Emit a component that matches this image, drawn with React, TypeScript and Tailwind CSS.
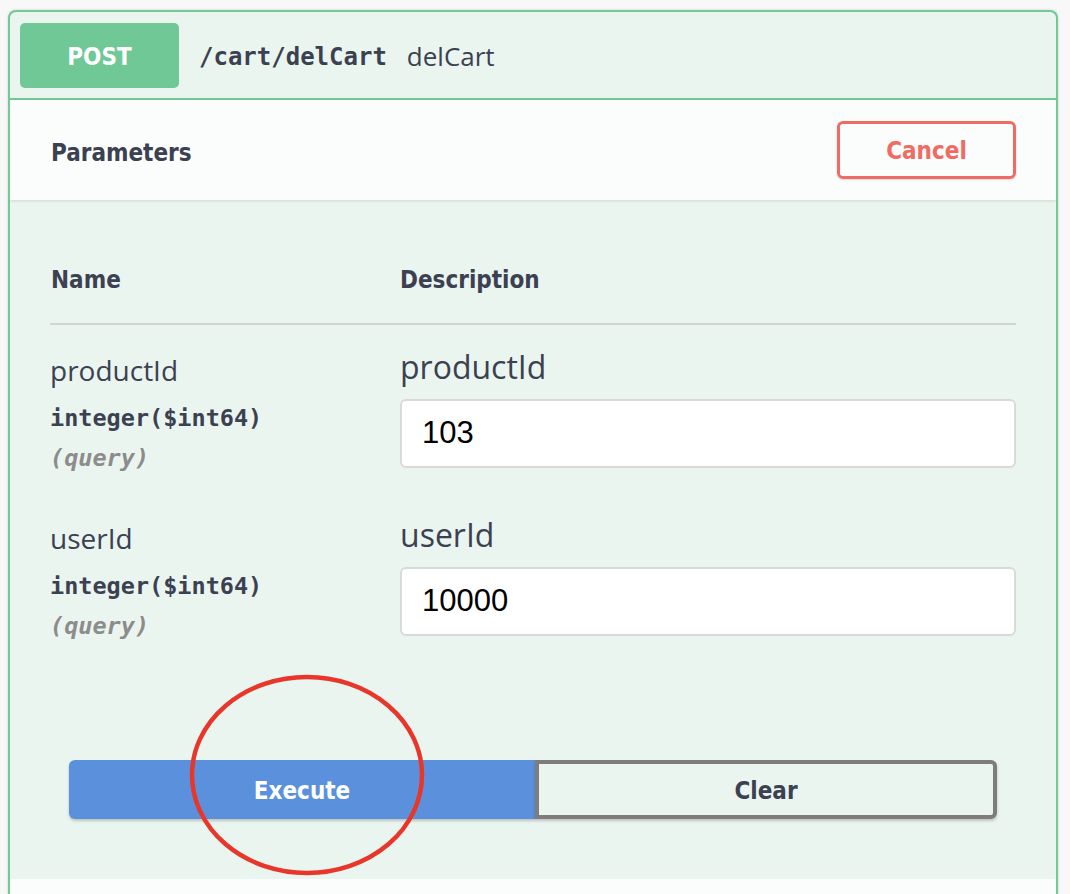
import React from "react";

const title = "font-['DejaVu_Sans_Condensed','DejaVu_Sans',sans-serif]";
const open = "font-['Open_Sans',sans-serif]";
const mono = "font-['DejaVu_Sans_Mono',monospace]";

function ParamRow({ name, value }: { name: string; value: string }) {
  return (
    <div className="flex h-[168px]">
      <div className="w-[350px] pt-[27px]">
        <div className={`${open} text-[28px] leading-[36px] text-[#3b4151]`}>{name}</div>
        <div className={`${mono} mt-[16px] text-[23.5px] font-bold leading-[28px] text-[#3b4151]`}>integer($int64)</div>
        <div className={`${mono} mt-[12px] text-[23.5px] font-bold italic leading-[28px] text-[#8c8c8c]`}>(query)</div>
      </div>
      <div className="flex-1 pt-[24px]">
        <div className={`${open} text-[32px] leading-[36px] text-[#3b4151]`}>{name}</div>
        <div className="mt-[14px] flex h-[69px] items-center rounded-[6px] border-2 border-[#d9d9d9] bg-white pl-[20px]">
          <span className="font-['Liberation_Sans',Arial,sans-serif] text-[31px] text-black">{value}</span>
        </div>
      </div>
    </div>
  );
}

export default function App() {
  return (
    <div className="relative min-h-[894px] w-[1070px] overflow-hidden bg-[#f8f8f8] pl-[8px] pt-[10px]">
      <div className="w-[1050px] overflow-hidden rounded-t-[8px] border-2 border-b-0 border-[#71c994] bg-[#ebf5f0] shadow-[0_0_3px_rgba(0,0,0,0.15)]">
        {/* header */}
        <div className="flex h-[88px] items-center border-b-2 border-[#71c994] pl-[10px]">
          <div className={`${title} flex h-[65px] w-[159px] items-center justify-center rounded-[5px] bg-[#6fc895] pt-[3px] text-[24px] font-bold text-white`}>
            POST
          </div>
          <span className={`${mono} ml-[20px] pt-[3px] text-[24px] font-bold text-[#3b4151]`}>/cart/delCart</span>
          <span className={`${open} ml-[20px] pt-[3px] text-[26px] text-[#3b4151]`}>delCart</span>
        </div>
        {/* parameters bar */}
        <div className="flex h-[100px] items-center justify-between bg-[#fbfdfc] pl-[41px] pr-[40px] shadow-[0_1px_3px_rgba(0,0,0,0.12)]">
          <span className={`${title} pt-[6px] text-[24px] font-bold text-[#3b4151]`}>Parameters</span>
          <div className={`${title} flex h-[58px] w-[179px] items-center justify-center rounded-[6px] border-[3px] border-[#ef6b64] pt-[2px] text-[24px] font-bold text-[#ef6b64] shadow-[0_1px_2px_rgba(0,0,0,0.15)]`}>
            Cancel
          </div>
        </div>
        {/* table */}
        <div className="px-[40px]">
          <div className={`${title} flex h-[125px] items-end border-b-2 border-[#d0d5d8] pb-[28px] text-[24px] font-bold leading-[30px] text-[#3b4151]`}>
            <div className="w-[350px] pl-[1px]">Name</div>
            <div>Description</div>
          </div>
          <ParamRow name="productId" value="103" />
          <ParamRow name="userId" value="10000" />
        </div>
        {/* buttons */}
        <div className="flex px-[59px] pb-[60px] pt-[99px]">
          <div className={`${title} flex h-[59px] w-[466px] items-center justify-center rounded-l-[6px] bg-[#5b91dc] pt-[2px] text-[24px] font-bold text-white shadow-[0_2px_3px_rgba(0,0,0,0.2)]`}>
            Execute
          </div>
          <div className={`${title} flex h-[59px] flex-1 items-center justify-center rounded-r-[6px] border-[4px] border-[#7d7d7d] pt-[2px] text-[24px] font-bold text-[#3b4151] shadow-[0_2px_3px_rgba(0,0,0,0.2)]`}>
            Clear
          </div>
        </div>
        <div className="h-[40px] bg-[#fbfdfc]" />
      </div>
      <svg className="absolute left-0 top-0" width="1070" height="894" viewBox="0 0 1070 894">
        <ellipse cx="307" cy="775" rx="115" ry="98" fill="none" stroke="#e8362a" strokeWidth="4.5" />
      </svg>
    </div>
  );
}
